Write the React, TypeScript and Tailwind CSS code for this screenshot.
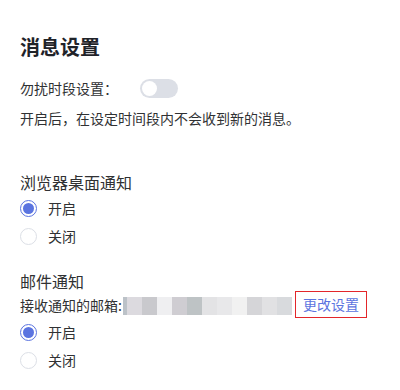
import React from "react";

const font = { fontFamily: '"Noto Sans CJK SC", "Noto Sans", sans-serif' };

function Radio({ checked, label }: { checked: boolean; label: string }) {
  return (
    <div className="flex items-center h-[28px]">
      {checked ? (
        <span className="w-[17px] h-[17px] rounded-full border border-[#5b74e0] bg-white flex items-center justify-center">
          <span className="w-[11px] h-[11px] rounded-full bg-[#5b74e0]" />
        </span>
      ) : (
        <span className="w-[17px] h-[17px] rounded-full border border-[#dcdfe6] bg-white" />
      )}
      <span className="ml-[11px] text-[14px] text-[#303133] leading-[20px]">{label}</span>
    </div>
  );
}

const blur = [
  "#bcc2c8",
  "#dcdadf",
  "#c9c9cd",
  "#efeff1",
  "#cfcdd2",
  "#bec3c5",
  "#e3e3e5",
  "#e8e8ea",
  "#f1f1f1",
  "#d5d5d8",
  "#e1e1e3",
  "#d8dadd",
];

export default function App() {
  return (
    <div className="w-[400px] h-[390px] bg-white pl-5 pt-[33px] overflow-hidden" style={font}>
      <h1 className="text-[20px] font-bold leading-[28px] h-[28px] text-[#1f2329]">消息设置</h1>
      <div className="mt-[17px] flex items-center h-[20px]">
        <span className="w-[120px] text-[14px] text-[#303133] leading-[20px]">勿扰时段设置：</span>
        <span className="w-[38px] h-[19px] rounded-full bg-[#dcdfe6] flex items-center px-[2px]">
          <span className="w-[15px] h-[15px] rounded-full bg-white" />
        </span>
      </div>
      <p className="mt-[10px] h-[20px] text-[14px] leading-[20px] text-[#303133]">
        开启后，在设定时间段内不会收到新的消息。
      </p>
      <h2 className="mt-[44px] h-[20px] text-[16px] leading-[20px] text-[#303133]">浏览器桌面通知</h2>
      <div className="mt-[2px]">
        <Radio checked label="开启" />
        <Radio checked={false} label="关闭" />
      </div>
      <h2 className="mt-[21px] h-[20px] text-[16px] leading-[20px] text-[#303133]">邮件通知</h2>
      <div className="flex items-center h-[27px]">
        <span className="text-[14px] leading-[20px] text-[#303133] w-[103px]">接收通知的邮箱:</span>
        <div className="flex h-[18px] mt-[2px]">
          {blur.map((c, i) => (
            <div key={i} className={i === 0 ? "w-[4px] h-full" : "w-[15px] h-full"} style={{ backgroundColor: c }} />
          ))}
        </div>
        <span className="ml-[3px] h-[27px] w-[72px] border border-[#e3262a] flex items-center justify-center text-[14px] text-[#5b74e0]">
          更改设置
        </span>
      </div>
      <div>
        <Radio checked label="开启" />
        <Radio checked={false} label="关闭" />
      </div>
    </div>
  );
}
